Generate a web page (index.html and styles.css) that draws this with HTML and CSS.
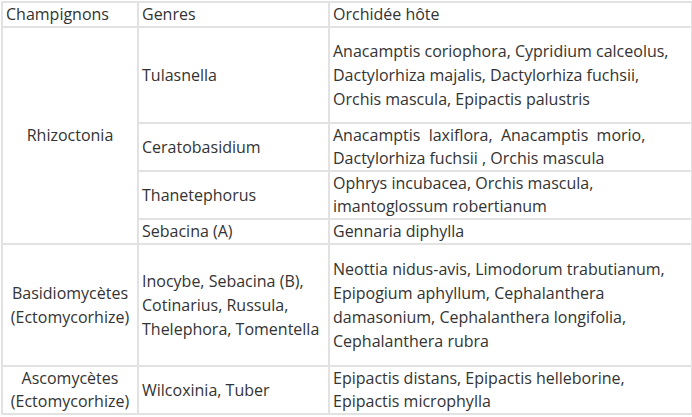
FILE: index.html
```html
<!DOCTYPE html>
<html lang="fr">
<head>
<meta charset="utf-8">
<title>Champignons et orchidées</title>
<link rel="stylesheet" href="styles.css">
</head>
<body>
<table class="tbl">
  <colgroup>
    <col class="w1">
    <col class="w2">
    <col class="w3">
  </colgroup>
  <tr class="head">
    <td class="c1 left">Champignons</td>
    <td class="c2">Genres</td>
    <td class="c3">Orchidée hôte</td>
  </tr>
  <tr>
    <td class="c1" rowspan="4">Rhizoctonia</td>
    <td class="c2">Tulasnella</td>
    <td class="c3 pad pad-a">Anacamptis coriophora, Cypridium calceolus, Dactylorhiza majalis, Dactylorhiza fuchsii, Orchis mascula, Epipactis palustris</td>
  </tr>
  <tr>
    <td class="c2">Ceratobasidium</td>
    <td class="c3">Anacamptis&nbsp; laxiflora,&nbsp; Anacamptis&nbsp; morio, Dactylorhiza fuchsii , Orchis mascula</td>
  </tr>
  <tr>
    <td class="c2">Thanetephorus</td>
    <td class="c3">Ophrys incubacea, Orchis mascula,<br>imantoglossum robertianum</td>
  </tr>
  <tr>
    <td class="c2">Sebacina (A)</td>
    <td class="c3">Gennaria diphylla</td>
  </tr>
  <tr class="tall">
    <td class="c1">Basidiomycètes<br>(Ectomycorhize)</td>
    <td class="c2">Inocybe, Sebacina (B), Cotinarius, Russula, Thelephora, Tomentella</td>
    <td class="c3 pad pad-b">Neottia nidus-avis, Limodorum trabutianum, Epipogium aphyllum, Cephalanthera damasonium, Cephalanthera longifolia, Cephalanthera rubra</td>
  </tr>
  <tr>
    <td class="c1">Ascomycètes<br>(Ectomycorhize)</td>
    <td class="c2">Wilcoxinia, Tuber</td>
    <td class="c3">Epipactis distans, Epipactis helleborine,<br>Epipactis microphylla</td>
  </tr>
</table>
</body>
</html>
```
FILE: styles.css
```css
html, body {
  margin: 0;
  padding: 0;
  background: #fff;
}
body {
  padding: 1px 0 0 1px;
  font-family: "Open Sans", "DejaVu Sans", sans-serif;
  font-size: 16px;
  line-height: 23px;
  color: #333;
}
.tbl {
  border-collapse: collapse;
  table-layout: fixed;
  width: 690px;
}
.w1 { width: 136px; }
.w2 { width: 191px; }
.w3 { width: 363px; }
.tbl td {
  border: 2px solid #e2e2e2;
  padding: 0 3px;
  vertical-align: middle;
}
.c1 {
  text-align: center;
}
.c1.left {
  text-align: left;
}
.pad,
.tall td {
  line-height: 24px;
}
.tbl td.pad-a {
  padding-top: 11px;
  padding-bottom: 11px;
}
.tbl td.pad-b {
  padding-top: 12px;
  padding-bottom: 12px;
}
```
